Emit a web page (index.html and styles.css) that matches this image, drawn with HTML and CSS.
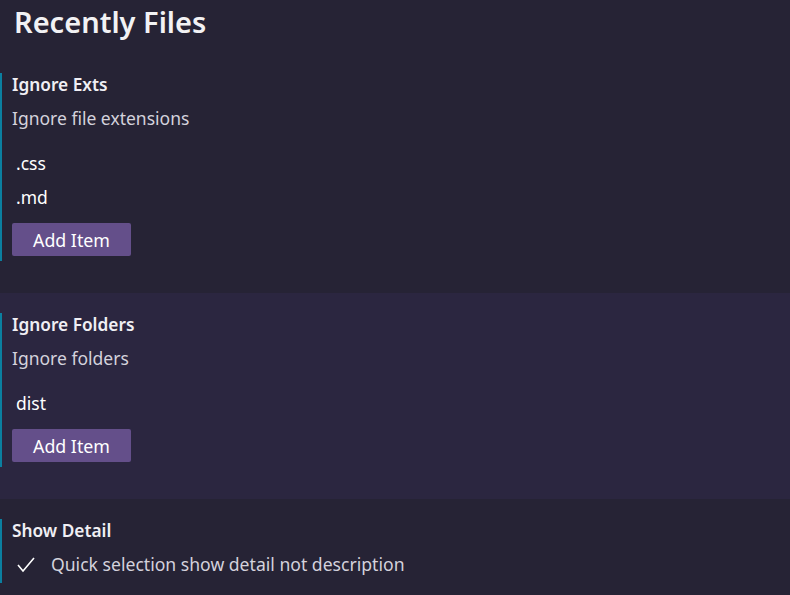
FILE: index.html
```html
<!DOCTYPE html>
<html>
<head>
<meta charset="utf-8">
<link rel="stylesheet" href="styles.css">
</head>
<body>
<h1 class="title">Recently Files</h1>
<div class="setting">
  <div class="setting-body">
    <div class="label">Ignore Exts</div>
    <div class="desc">Ignore file extensions</div>
    <ul class="list">
      <li class="item">.css</li>
      <li class="item">.md</li>
    </ul>
    <button class="btn">Add Item</button>
  </div>
</div>
<div class="setting hover">
  <div class="setting-body">
    <div class="label">Ignore Folders</div>
    <div class="desc">Ignore folders</div>
    <ul class="list">
      <li class="item">dist</li>
    </ul>
    <button class="btn">Add Item</button>
  </div>
</div>
<div class="setting last">
  <div class="setting-body">
    <div class="label">Show Detail</div>
    <label class="check-row">
      <svg class="check" width="20" height="17" viewBox="0 0 20 17"><path d="M2 9 L7 15 L18 2" fill="none" stroke="#ffffff" stroke-width="1.6"/></svg>
      <span class="check-text">Quick selection show detail not description</span>
    </label>
  </div>
</div>
</body>
</html>
```

FILE: styles.css
```css
html, body {
  margin: 0;
  padding: 0;
  background: #262335;
  font-family: "Noto Sans", "Open Sans", sans-serif;
  color: #ffffff;
}
.title {
  margin: 0;
  height: 53px;
  box-sizing: border-box;
  padding: 2px 0 0 14px;
  font-size: 29px;
  font-weight: 600;
  line-height: 40px;
  color: #f2f2f4;
}
.setting {
  padding: 20px 0 32px 0;
}
.setting.hover {
  background: #2b2640;
}
.setting-body {
  border-left: 2px solid #0b7fa0;
  padding-left: 10px;
  padding-bottom: 5px;
  display: flex;
  flex-direction: column;
  align-items: flex-start;
}
.setting.last .setting-body {
  padding-bottom: 8px;
}
.label {
  font-size: 17.3px;
  font-weight: 600;
  line-height: 24px;
  color: #f0eff4;
}
.desc {
  font-size: 17.5px;
  line-height: 22px;
  margin-top: 10px;
  color: #d4d2dc;
}
.list {
  list-style: none;
  margin: 17px 0 0 0;
  padding: 0;
}
.item {
  font-size: 17.5px;
  line-height: 34px;
  padding-left: 4px;
  color: #ffffff;
}
.btn {
  margin-top: 9px;
  background: #644f8a;
  color: #ffffff;
  border: none;
  border-radius: 2px;
  font-family: inherit;
  font-size: 17.8px;
  width: 119px;
  height: 33px;
  padding: 0;
}
.check-row {
  display: flex;
  align-items: center;
  margin-top: 10px;
  gap: 15px;
  padding-left: 4px;
  height: 22px;
}
.check { display: block; }
.check-text {
  font-size: 17.6px;
  line-height: 22px;
  color: #d4d2dc;
}
```
